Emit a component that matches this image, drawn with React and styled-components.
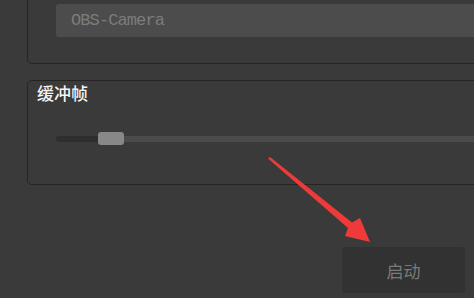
import React from "react";
import styled, { createGlobalStyle } from "styled-components";

const Global = createGlobalStyle`
  html, body { margin: 0; padding: 0; background: #3a3a3a; overflow: hidden; }
  body { width: 474px; height: 298px; }
`;

const Page = styled.div`
  position: relative;
  width: 474px;
  height: 298px;
  overflow: hidden;
  padding-left: 27px;
  box-sizing: border-box;
  display: flex;
  flex-direction: column;
  font-family: "Noto Sans CJK SC", "Noto Sans", sans-serif;
`;

const Group = styled.section`
  margin-right: -30px;
  border: 1px solid #242424;
  border-radius: 5px;
  box-sizing: border-box;
  display: flex;
  flex-direction: column;
  padding: ${(p) => p.$pad};
  margin-top: ${(p) => p.$mt || "0"};
`;

const TextInput = styled.div`
  height: 33px;
  background: #4c4c4c;
  border-radius: 3px;
  display: flex;
  align-items: center;
  padding-left: 15px;
  font-family: "Liberation Mono", "DejaVu Sans Mono", monospace;
  font-size: 17px;
  letter-spacing: -0.9px;
  color: #7c7c7c;
`;

const Title = styled.div`
  color: #f4f4f4;
  font-size: 17px;
  font-weight: 500;
  line-height: 20px;
  height: 20px;
`;

const SliderTrack = styled.div`
  position: relative;
  margin-top: 29px;
  margin-left: 19px;
  height: 13px;
  display: flex;
  align-items: center;
`;

const TrackRest = styled.div`
  flex: 1;
  height: 6px;
  background: #4b4b4b;
`;

const TrackFill = styled.div`
  height: 6px;
  background: #2e2e2e;
  border-radius: 3px 0 0 3px;
`;

const Thumb = styled.div`
  position: absolute;
  top: 0;
  width: 26px;
  height: 13px;
  background: #888888;
  border-radius: 3px;
`;

const Footer = styled.div`
  display: flex;
  justify-content: flex-end;
  padding-right: 9px;
  margin-top: 62px;
`;

const Button = styled.button`
  width: 123px;
  height: 46px;
  border: none;
  border-radius: 3px;
  background: #323232;
  color: #7a7a7a;
  font-family: "Noto Sans CJK SC", sans-serif;
  font-size: 17px;
  padding: 0;
`;

const ArrowLayer = styled.svg`
  position: absolute;
  left: 0;
  top: 0;
  pointer-events: none;
`;

export default function App() {
  const value = 42;
  return (
    <>
      <Global />
      <Page>
        <Group $pad="23px 0 26px 28px" $mt="-20px">
          <TextInput>OBS-Camera</TextInput>
        </Group>
        <Group $pad="2px 0 39px 9px" $mt="16px">
          <Title>缓冲帧</Title>
          <SliderTrack>
            <TrackFill style={{ width: value + 4 }} />
            <TrackRest />
            <Thumb style={{ left: value }} />
          </SliderTrack>
        </Group>
        <Footer>
          <Button>启动</Button>
        </Footer>
        <ArrowLayer width="474" height="298" viewBox="0 0 474 298">
          <polygon
            points="268,158.5 270,157 352,222.5 360,218 370,242 345,236 348,228"
            fill="#ef3a3a"
          />
        </ArrowLayer>
      </Page>
    </>
  );
}
